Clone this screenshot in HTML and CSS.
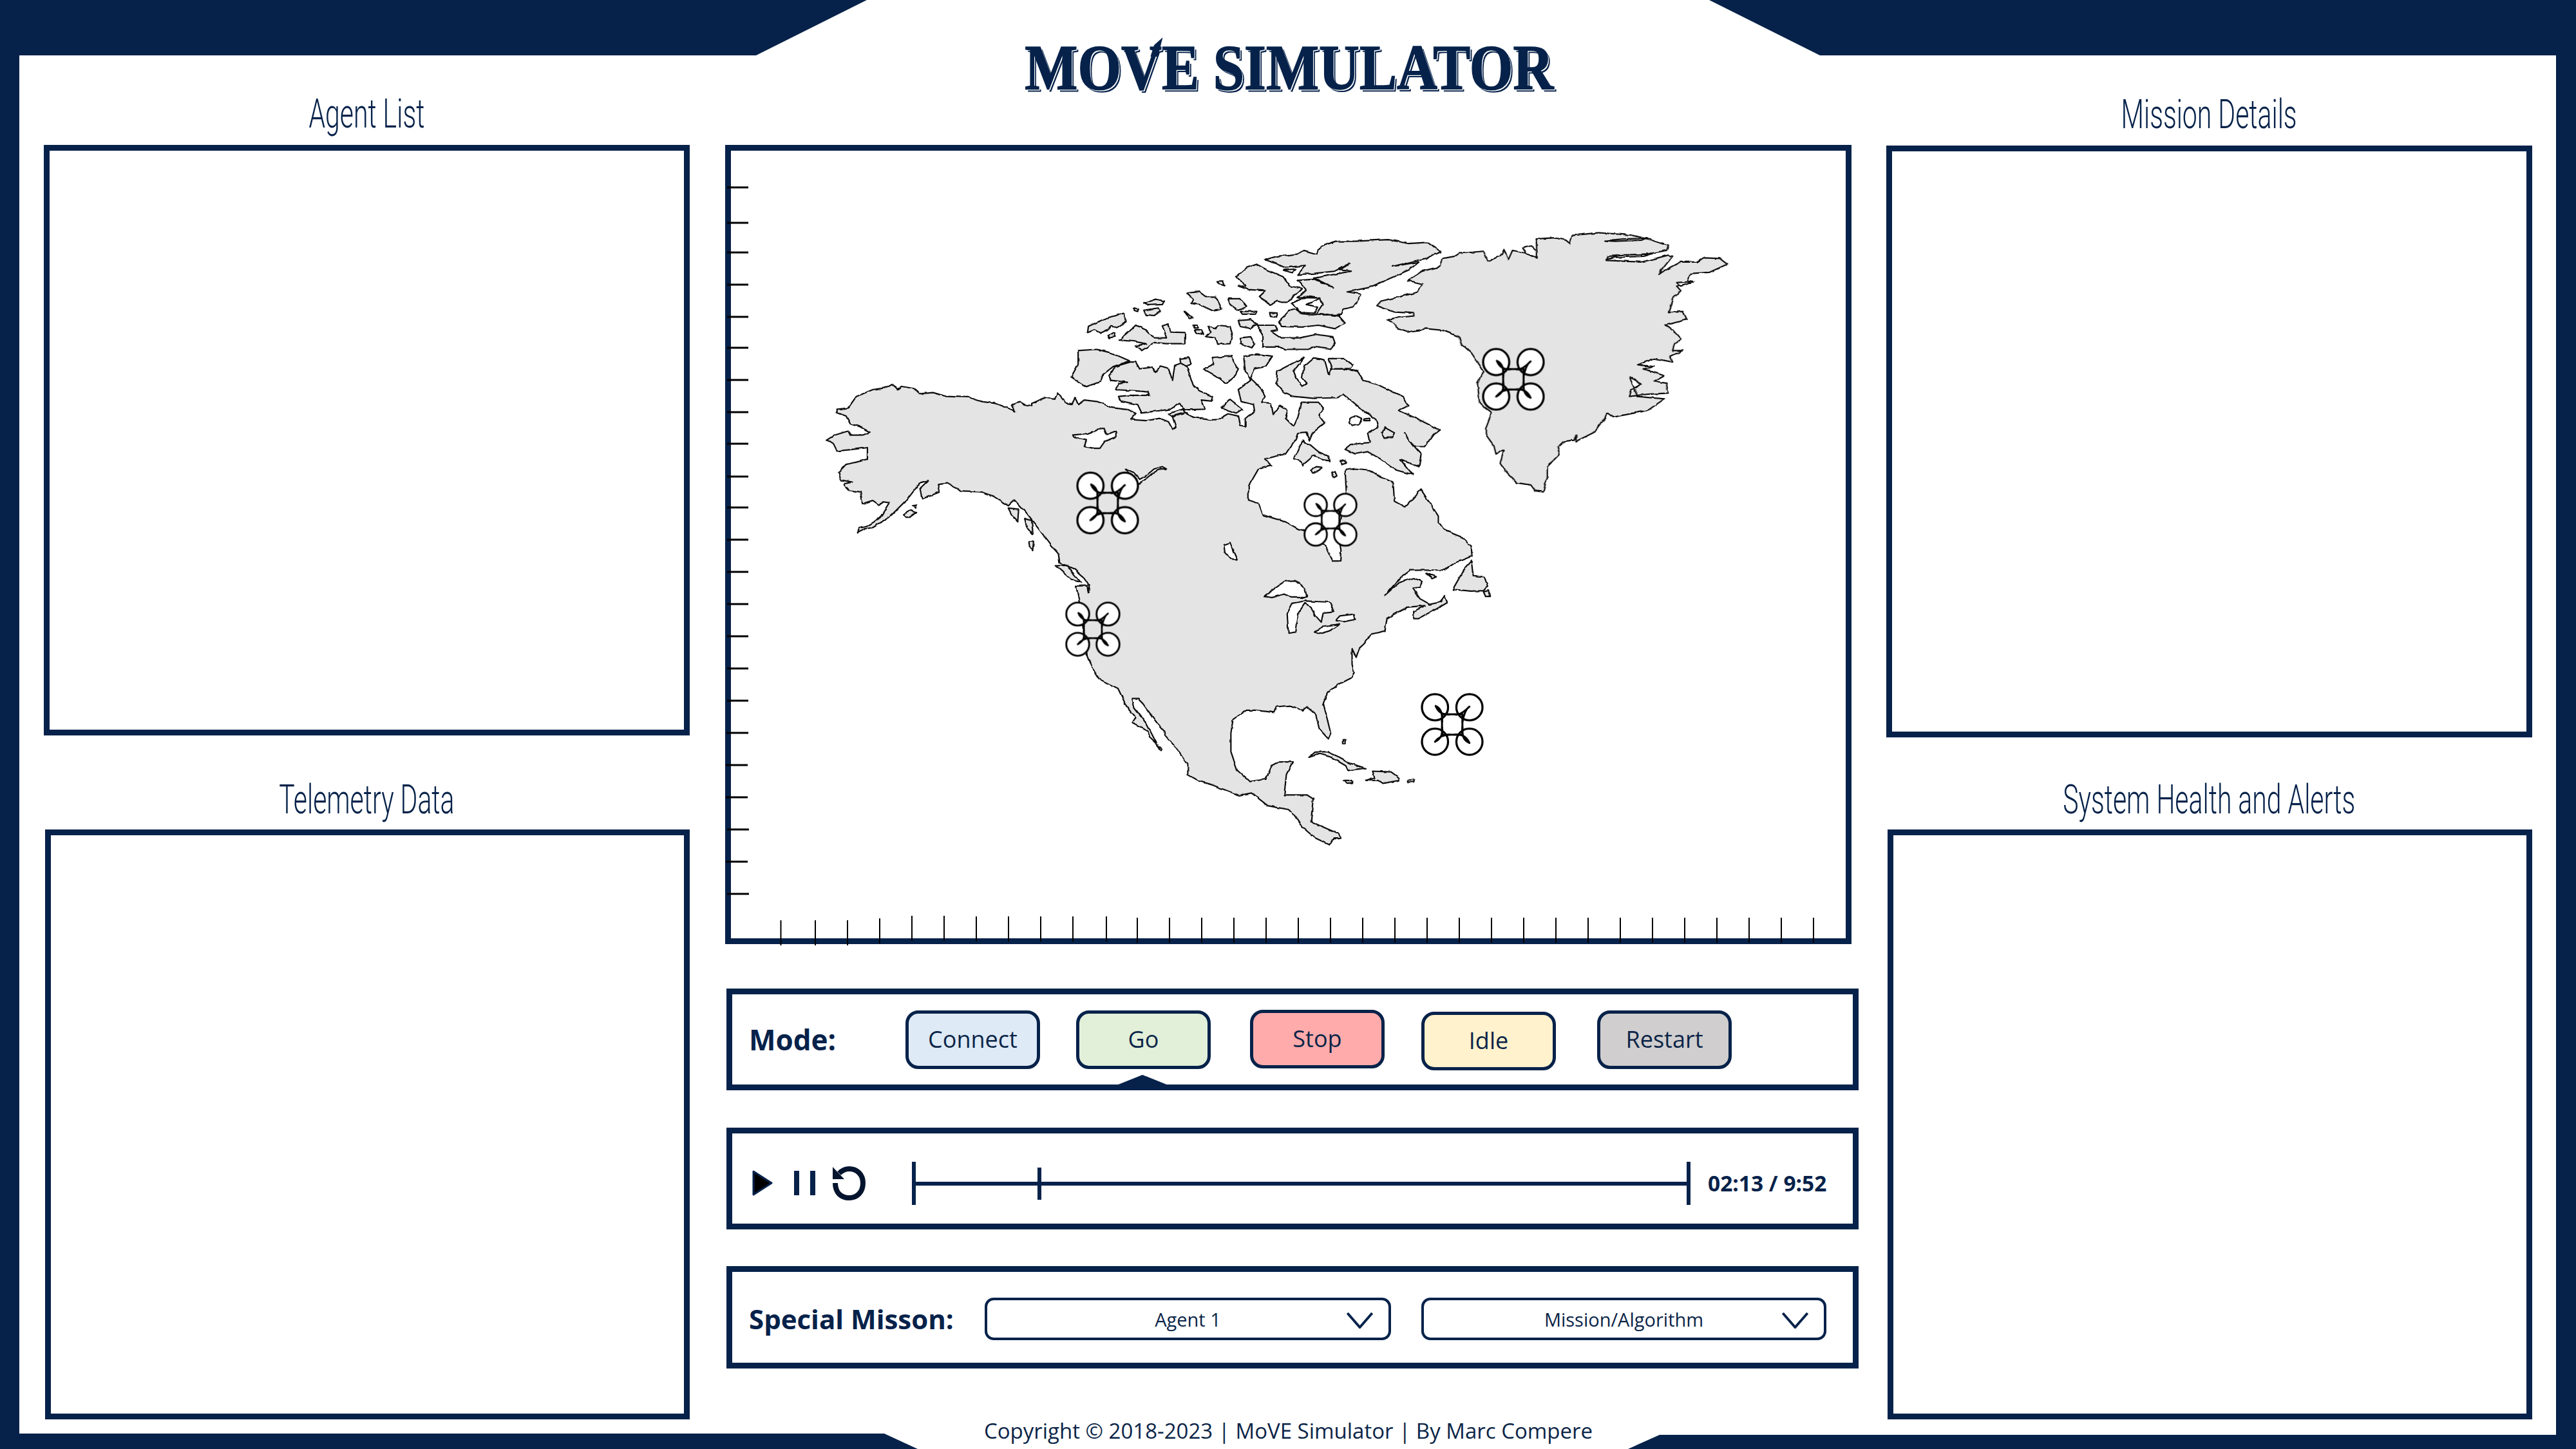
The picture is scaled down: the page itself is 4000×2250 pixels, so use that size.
FILE: index.html
```html
<!DOCTYPE html>
<html lang="en">
<head>
<meta charset="utf-8">
<title>MoVE Simulator</title>
<link rel="stylesheet" href="styles.css">
</head>
<body>
<div class="screen">
  <div class="sheet">
    <aside class="col col-left">
      <h2 class="heading"><span>Agent List</span></h2>
      <section class="panel panel-a"></section>
      <h2 class="heading heading-low"><span>Telemetry Data</span></h2>
      <section class="panel panel-b"></section>
    </aside>

    <main class="center">
      <header class="title-box"><h1 class="title">MO<span class="swash">V</span>E SIMULATOR</h1></header>

      <section class="map-panel">
        <svg class="map" viewBox="1126 225 1749 1241" xmlns="http://www.w3.org/2000/svg">
          <defs>
            <filter id="rough" filterUnits="userSpaceOnUse" x="1126" y="225" width="1749" height="1241">
              <feTurbulence type="fractalNoise" baseFrequency="0.09" numOctaves="2" seed="4" result="n"/>
              <feDisplacementMap in="SourceGraphic" in2="n" scale="4" xChannelSelector="R" yChannelSelector="G"/>
            </filter>
            <g id="drone">
              <circle class="rotor" cx="-27" cy="-27" r="20.5"/>
              <circle class="rotor" cx="27" cy="-27" r="20.5"/>
              <circle class="rotor" cx="-27" cy="27" r="20.5"/>
              <circle class="rotor" cx="27" cy="27" r="20.5"/>
              <rect class="body" x="-16" y="-16" width="32" height="32"/>
              <path class="arm" d="M-26-29Q-20-14-4-16M-26-29Q-14-24-16-4M27-28Q12-13 4-16M27-28Q20-24 16-4M-27 27Q-13 20-16 4M-27 27Q-18 16-4 16M27 29Q20 14 4 16M27 29Q14 24 16 4"/>
            </g>
          </defs>

          <g filter="url(#rough)">
            <g transform="translate(1250 330) scale(.63776 .35714)">
              <path class="land" d="M128 1390 132 1372 150 1365 168 1345 185 1320 205 1262 190 1258 180 1270 165 1252 140 1266 135 1215 108 1208 93 1180 115 1172 88 1163 82 1130 100 1095 125 1085 152 1072 152 1022 125 1028 78 1037 68 1000 52 990 72 968 105 950 110 968 140 968 158 955 132 930 110 918 100 885 78 870 78 855 105 850 125 800 165 770 195 762 212 745 225 768 235 756 265 765 280 788 312 783 345 800 398 803 430 822 465 830 505 858 512 868 503 835 525 825 535 835 552 840 552 830 585 805 608 812 615 785 635 828 650 832 658 805 665 835 680 815 712 822 745 848 790 858 805 875 792 900 830 905 865 895 885 910 895 942 903 932 895 890 922 868 945 890 985 902 1005 900 1030 875 1055 885 1060 925 1072 930 1072 895 1095 868 1092 835 1062 822 1055 770 1085 730 1072 690 1068 625 1100 615 1138 625 1122 668 1095 680 1085 720 1110 765 1120 800 1112 825 1135 830 1140 878 1155 840 1175 860 1170 895 1190 930 1200 890 1210 825 1250 825 1262 850 1250 880 1265 915 1235 960 1228 990 1222 955 1200 958 1195 985 1170 1050 1118 1072 1135 1098 1105 1112 1080 1190 1080 1250 1105 1265 1115 1315 1170 1345 1200 1375 1240 1395 1270 1460 1285 1515 1303 1515 1305 1470 1298 1400 1318 1215 1315 1120 1340 1113 1375 1120 1400 1150 1432 1172 1435 1255 1460 1280 1500 1205 1542 1320 1542 1350 1562 1385 1597 1410 1622 1450 1624 1494 1582 1524 1557 1554 1472 1556 1452 1584 1412 1664 1447 1609 1482 1589 1502 1604 1497 1629 1480 1634 1497 1679 1522 1704 1547 1694 1557 1666 1564 1696 1537 1724 1492 1766 1482 1766 1482 1734 1510 1709 1467 1716 1442 1739 1417 1764 1412 1819 1377 1834 1362 1874 1350 1894 1342 1934 1332 1896 1332 1964 1337 1999 1330 2024 1297 2054 1272 2089 1262 2134 1280 2264 1274 2289 1252 2244 1244 2184 1222 2149 1212 2164 1182 2144 1147 2149 1142 2174 1122 2169 1097 2164 1075 2164 1042 2204 1037 2264 1037 2344 1052 2424 1082 2474 1122 2464 1137 2404 1152 2389 1187 2389 1172 2444 1167 2532 1222 2532 1237 2549 1232 2649 1297 2699 1307 2719 1287 2719 1277 2749 1242 2719 1212 2674 1187 2609 1177 2596 1127 2579 1087 2524 1057 2534 992 2489 962 2474 932 2444 932 2399 907 2334 877 2274 874 2254 857 2219 822 2134 812 2116 797 2116 802 2154 832 2224 862 2329 867 2342 870 2334 840 2284 834 2254 797 2219 805 2194 782 2144 762 2069 717 2029 697 1974 687 1929 667 1684 660 1624 687 1622 690 1654 692 1624 677 1584 654 1549 642 1539 620 1524 617 1484 600 1450 575 1390 560 1355 535 1300 510 1250 495 1275 460 1235 430 1215 380 1210 345 1175 325 1180 328 1215 285 1245 280 1200 300 1165 280 1175 250 1245 205 1325 165 1370 145 1375Z"/>
              <path class="land" d="M1215 630 1190 690 1195 720 1210 755 1222 745 1210 720 1215 670 1240 632 1265 640 1275 705 1280 680 1310 680 1345 690 1360 730 1390 745 1420 770 1455 800 1470 840 1445 860 1470 880 1500 905 1545 945 1530 965 1510 1015 1480 1015 1460 960 1470 990 1500 1050 1495 1105 1450 1075 1480 1140 1440 1120 1400 1070 1370 1040 1340 1050 1315 1030 1330 1008 1375 1000 1370 960 1395 935 1390 900 1350 850 1310 790 1295 805 1240 808 1190 800 1165 780 1148 745 1150 690Z"/>
              <path class="land" d="M1275 635 1310 635 1335 665 1330 678 1285 680ZM1212 990 1200 1040 1188 1070 1207 1080 1212 1098 1240 1055 1260 1075 1278 1080 1275 1060 1250 1040 1230 1010 1215 1005ZM1245 1105 1258 1108 1250 1125 1238 1130 1233 1118ZM1303 1082 1313 1078 1318 1090 1308 1095ZM1283 1130 1290 1125 1295 1145 1288 1152ZM1412 935 1435 958 1430 975 1410 978 1405 958ZM240 1315 255 1295 270 1305 255 1325 245 1325ZM262 1275 272 1272 270 1285ZM495 1285 520 1290 518 1345 505 1320ZM535 1330 552 1340 555 1400 540 1370ZM545 1428 558 1430 556 1470 547 1455ZM665 600 710 595 745 610 790 645 750 670 725 705 720 735 685 757 648 715 665 660ZM792 650 805 650 815 680 845 672 855 695 865 670 885 680 895 730 900 665 915 655 930 670 945 750 960 775 992 800 990 820 965 815 975 855 925 858 912 830 890 855 820 872 810 835 770 820 765 800 790 795 838 795 835 780 805 775 755 770 765 745 785 738 745 730 740 710 755 670ZM913 635 935 630 940 655 928 670 915 655ZM992 630 1040 625 1045 660 1055 680 1045 715 1025 745 1000 710 970 680 995 660ZM1035 812 1065 855 1050 872 1015 850ZM885 875 920 855 925 870 895 885ZM690 495 730 462 778 437 780 475 760 500 745 495 738 510 720 525 705 510 688 522ZM805 490 830 510 850 545 880 545 870 490 885 482 890 520 925 522 925 570 880 570 850 565 820 600 805 580 830 570 800 560 765 555 785 525ZM738 535 752 520 755 540 742 545ZM825 425 860 415 865 430 850 448 830 445ZM825 395 855 377 875 385 870 400 835 403ZM800 415 812 420 810 430 800 425ZM925 430 945 460 935 460ZM930 350 960 345 975 365 1000 365 1015 420 990 425 960 400 940 395 945 375ZM1030 375 1060 375 1075 410 1055 425 1035 400ZM1060 430 1100 430 1095 442 1065 442ZM1055 470 1085 465 1100 485 1085 505 1060 495ZM945 490 955 490 958 502 948 502ZM950 510 965 510 970 530 955 525ZM980 495 1000 505 1005 490 1035 495 1040 530 1035 570 1005 572 1000 545 975 540 990 520ZM1060 545 1085 540 1095 570 1088 588 1060 570ZM1100 490 1145 490 1150 510 1135 515 1160 545 1205 545 1245 530 1285 540 1290 565 1280 595 1240 585 1225 595 1170 595 1160 585 1115 585 1115 530ZM1155 475 1175 430 1195 420 1210 440 1235 445 1258 440 1300 450 1315 480 1290 505 1250 490 1210 498 1160 495ZM1133 438 1148 440 1148 455 1135 452ZM1050 280 1075 240 1100 225 1125 250 1165 280 1180 320 1210 330 1175 390 1160 390 1150 385 1135 400 1105 365 1120 340 1080 335 1055 320 1075 320ZM1120 205 1150 190 1200 180 1215 165 1245 180 1255 150 1290 125 1340 125 1395 120 1420 118 1470 135 1515 130 1548 170 1510 200 1430 235 1495 215 1470 250 1420 290 1375 325 1320 345 1355 355 1345 385 1335 410 1310 420 1305 445 1260 445 1245 440 1260 400 1255 375 1225 365 1200 370 1220 335 1200 295 1240 290 1285 325 1240 285 1330 255 1300 250 1325 222 1290 255 1240 265 1200 270 1218 230 1170 240 1130 210ZM1005 298 1018 298 1022 318 1010 312Z"/>
              <path class="water" d="M652 968 690 960 728 935 735 965 757 950 757 975 730 995 718 1025 705 1025 680 1018 685 990 655 978ZM780 1115 800 1130 815 1160 830 1145 850 1115 870 1105 880 1115 865 1115 845 1135 825 1165 810 1180ZM1020 1445 1035 1435 1042 1470 1052 1510 1040 1510 1022 1475ZM1327 895 1340 882 1355 895 1350 922 1332 928 1325 915ZM1360 898 1375 895 1377 905 1362 905ZM1165 250 1195 245 1185 262ZM1185 395 1215 370 1255 372 1222 400 1248 412 1240 438 1208 435Z"/>
            </g>
            <g transform="translate(1800 330) scale(.63776 .35714)">
              <path class="land" d="M605 295 640 255 685 235 690 200 720 190 730 178 790 168 800 210 830 190 840 160 850 205 860 165 890 175 920 198 918 115 960 110 990 120 1000 135 1005 100 1070 88 1150 98 1190 115 1240 145 1235 165 1190 180 1095 190 1090 208 1175 215 1240 185 1250 190 1215 268 1270 215 1310 215 1325 197 1365 200 1383 225 1340 260 1295 265 1285 295 1300 300 1260 320 1270 340 1250 375 1240 435 1275 430 1285 465 1232 490 1250 510 1270 550 1255 570 1250 600 1275 600 1245 625 1250 650 1205 635 1165 662 1205 670 1180 680 1230 710 1205 735 1235 745 1240 785 1190 790 1145 800 1150 770 1175 745 1145 715 1165 800 1230 810 1190 860 1105 890 1090 870 1085 895 1060 955 1015 995 1015 965 1010 990 985 995 970 1020 975 1050 945 1105 945 1150 935 1215 915 1210 905 1185 870 1175 845 1130 830 1090 840 1030 820 1050 815 1015 795 965 795 940 810 870 780 830 775 740 790 690 760 610 735 570 730 540 690 512 650 505 605 520 580 505 570 480 555 465 590 455 620 450 620 438 570 432 530 405 540 385 600 360 630 345 640 310Z"/>
              <path class="water" d="M1085 122 1130 115 1185 112 1175 120 1110 125ZM1090 205 1120 185 1200 180 1180 190 1110 195ZM885 155 905 145 920 170 920 195 895 180ZM1260 305 1300 300 1270 320Z"/>
            </g>
            <g transform="translate(1500 860) scale(.63776 .35714)">
              <path class="water" d="M725 185 775 120 800 115 825 150 830 190 790 190 775 175 745 190ZM785 345 782 260 795 215 825 205 885 210 895 250 870 255 865 300 850 270 840 230 825 215 810 255 803 340ZM850 340 870 315 910 305 885 335 860 348ZM900 290 910 270 945 262 948 285 920 295ZM1120 85 1145 100 1135 108Z"/>
              <path class="land" d="M1215 60 1230 30 1235 95 1262 100 1270 140 1260 160 1230 162 1185 155ZM1260 165 1272 160 1275 185 1265 185ZM218 52 245 50 280 125 255 110ZM835 885 850 862 880 860 910 885 935 910 972 932 930 942 925 922 890 885 860 870ZM990 945 1035 948 1055 975 1055 985 1015 998 1005 985 972 985 995 975ZM920 985 938 985 943 995 930 997ZM1075 985 1092 980 1090 992 1076 992ZM917 808 923 808 923 825 917 825Z"/>
            </g>
          </g>

          <use href="#drone" transform="translate(1720 781) scale(.99)"/>
          <use href="#drone" transform="translate(2066 807) scale(.85)"/>
          <use href="#drone" transform="translate(2350 589) scale(.99)"/>
          <use href="#drone" transform="translate(1697 977) scale(.87)"/>
          <use href="#drone" transform="translate(2255 1125) scale(.99)"/>

          <path class="tick-left" d="M1129 291h33M1129 346h33M1129 392h33M1129 442h33M1129 492h33M1129 540h33M1129 590h33M1129 640h33M1129 689h33M1129 740h33M1129 788h33M1129 838h33M1129 888h33M1129 938h33M1129 988h33M1129 1038h33M1129 1088h33M1128 1138h34M1127 1188h34M1127 1238h34M1129 1288h34M1127 1338h34M1129 1388h34"/>
          <path class="tick-bottom" d="M1212.500 1429v39M1266 1429v39M1316 1429v39M1366 1426v39M1416 1422v39M1466 1422v39M1516 1423v39M1566 1423v39M1616 1423v39M1666 1423v39M1718 1423v39M1766 1425v39M1816 1425v39M1866 1425v39M1916 1425v39M1966 1425v39M2016 1425v39M2066 1425v39M2116 1425v39M2166 1425v39M2216 1425v39M2266 1425v39M2316 1425v39M2366 1425v39M2416 1425v39M2466 1425v39M2516 1425v39M2566 1425v39M2616 1425v39M2666 1425v39M2716 1425v39M2766 1425v39M2816 1425v39"/>
        </svg>
      </section>

      <section class="bar bar-mode">
        <span class="bar-label label-mode">Mode:</span>
        <button class="btn btn-connect">Connect</button>
        <button class="btn btn-go">Go</button>
        <button class="btn btn-stop">Stop</button>
        <button class="btn btn-idle">Idle</button>
        <button class="btn btn-restart">Restart</button>
        <i class="marker"></i>
      </section>

      <section class="bar bar-play">
        <svg class="ic ic-play" viewBox="0 0 32 40"><path d="M2 2 30 20 2 38Z"/></svg>
        <svg class="ic ic-pause" viewBox="0 0 33 38"><path d="M0 0h8v38H0zM25 0h8v38h-8z"/></svg>
        <svg class="ic ic-replay" viewBox="0 0 51 53"><path class="ic-arc" d="M4 26C4 41 13 49 25.500 49 38 49 47 40 47 26 47 13 38 4 25.500 4 19 4 14 7 10 11"/><path class="ic-head" d="M0 1 0 20 18 20Z"/></svg>
        <div class="track"><i class="stop-l"></i><i class="thumb"></i><i class="stop-r"></i></div>
        <span class="time">02:13 / 9:52</span>
      </section>

      <section class="bar bar-special">
        <span class="bar-label label-special">Special Misson:</span>
        <div class="select select-a"><span>Agent 1</span><svg class="chev" viewBox="0 0 44 26"><path d="M2 1 22 24 42 1"/></svg></div>
        <div class="select select-b"><span>Mission/Algorithm</span><svg class="chev" viewBox="0 0 44 26"><path d="M2 1 22 24 42 1"/></svg></div>
      </section>

      <footer class="copyright">Copyright © 2018-2023 | MoVE Simulator | By Marc Compere</footer>
    </main>

    <aside class="col col-right">
      <h2 class="heading"><span>Mission Details</span></h2>
      <section class="panel panel-c"></section>
      <h2 class="heading heading-low"><span>System Health and Alerts</span></h2>
      <section class="panel panel-d"></section>
    </aside>
  </div>
</div>
</body>
</html>
```
FILE: styles.css
```css
:root { --navy: #06224a; --ink: #0b2548; }
* { box-sizing: border-box; }
html, body { margin: 0; padding: 0; }
body { width: 4000px; height: 2250px; overflow: hidden; background: var(--navy); font-family: "Open Sans", "Liberation Sans", sans-serif; color: var(--ink); }
.screen { width: 4000px; height: 2250px; background: var(--navy); }
.sheet {
  width: 4000px; height: 2250px; background: #fff; display: flex; padding-left: 68px;
  clip-path: polygon(30px 86px, 1174px 86px, 1346px 0, 2654px 0, 2826px 86px, 3969px 86px, 3969px 2228px, 2577px 2228px, 2528px 2250px, 1425px 2250px, 1373px 2226px, 30px 2226px);
}
.col { width: 1003px; display: flex; flex-direction: column; padding-top: 139px; flex: none; }
.col-right { padding-top: 140px; }
.heading { margin: 0; height: 86px; display: flex; justify-content: center; font: 300 63px/75px Roboto, "Liberation Sans", sans-serif; color: var(--navy); white-space: nowrap; flex: none; }
.heading span { display: inline-block; transform: scaleX(.65); }
.heading-low { margin-top: 62px; height: 84px; }
.panel { border: 9px solid var(--navy); flex: none; }
.panel-a { height: 917px; }
.panel-b { height: 916px; margin-left: 2px; }
.panel-c { height: 919px; }
.panel-d { height: 916px; margin-left: 2px; width: 1001px; }
.col-right .heading-low { margin-top: 59px; }

.center { width: 1760px; margin: 0 43px 0 55px; flex: none; display: flex; flex-direction: column; }
.title-box { height: 225px; padding: 55px 8px 0 0; display: flex; justify-content: center; flex: none; }
.title { margin: 0; display: inline-block; font: 700 100px/100px "Liberation Serif", serif; color: var(--navy); white-space: nowrap; transform: scaleX(.87); -webkit-text-stroke: 1.5px var(--navy); text-shadow: 2px 2px 0 #fff, 4px 4px 0 var(--navy); }
.swash { position: relative; display: inline-block; }
.swash::after { content: ""; position: absolute; left: 52px; top: 3px; width: 22px; height: 30px; background: var(--navy); clip-path: polygon(100% 0, 60% 100%, 0 100%, 30% 40%); }

.map-panel { position: relative; width: 1749px; height: 1241px; border: 9px solid var(--navy); flex: none; }
.map { position: absolute; left: -9px; top: -9px; width: 1749px; height: 1241px; overflow: visible; }
.land { fill: #e4e4e4; stroke: #111; stroke-width: 2.2; stroke-linejoin: round; vector-effect: non-scaling-stroke; }
.water { fill: #fff; stroke: #111; stroke-width: 2.2; stroke-linejoin: round; vector-effect: non-scaling-stroke; }
.rotor { fill: #fff; stroke: #000; stroke-width: 3.3; }
.body { fill: none; stroke: #000; stroke-width: 3; }
.arm { fill: none; stroke: #000; stroke-width: 3; stroke-linecap: round; }
.tick-left { fill: none; stroke: #000; stroke-width: 3; }
.tick-bottom { fill: none; stroke: #000; stroke-width: 2; }

.bar { position: relative; width: 1758px; margin-left: 2px; height: 158px; border: 9px solid var(--navy); display: flex; align-items: center; padding-left: 26px; flex: none; }
.bar-mode { margin-top: 69px; }
.bar-play { margin-top: 58px; padding: 14px 0 0 31px; }
.bar-special { margin-top: 57px; height: 159px; padding-top: 5px; }
.bar-label { font-weight: 700; font-size: 43px; line-height: 60px; color: var(--navy); white-space: nowrap; }
.label-mode { width: 243px; flex: none; font-size: 44px; }
.label-special { width: 366px; flex: none; font-size: 42px; }

.btn { width: 209px; height: 91px; border: 5px solid var(--navy); border-radius: 20px; font: 400 36px/1 "Open Sans", sans-serif; color: var(--ink); padding: 0; flex: none; }
.btn-connect { background: #deeaf6; }
.btn-go { background: #e2efd9; margin-left: 56px; }
.btn-stop { background: #ffabab; margin-left: 61px; margin-bottom: 2px; }
.btn-idle { background: #fff2cc; margin-left: 57px; margin-top: 4px; }
.btn-restart { background: #d0cece; margin-left: 64px; }
.marker { position: absolute; left: 597px; bottom: -1px; width: 80px; height: 16px; background: var(--navy); clip-path: polygon(0 100%, 50% 0, 100% 100%); }

.ic { display: block; flex: none; }
.ic-play { width: 32px; height: 40px; fill: #000; stroke: var(--navy); stroke-width: 3; stroke-linejoin: round; }
.ic-pause { width: 33px; height: 38px; margin-left: 33px; fill: var(--navy); }
.ic-replay { width: 51px; height: 53px; margin-left: 27px; overflow: visible; }
.ic-arc { fill: none; stroke: #04142e; stroke-width: 8; }
.ic-head { fill: #04142e; }
.track { position: relative; width: 1209px; height: 67px; margin-left: 72px; flex: none; }
.track::before { content: ""; position: absolute; left: 0; right: 0; top: 31px; height: 6px; background: var(--navy); }
.track i { position: absolute; width: 6px; background: var(--navy); }
.stop-l { left: 0; top: 0; height: 67px; }
.stop-r { right: 0; top: 0; height: 67px; }
.thumb { left: 195px; top: 9px; height: 50px; }
.time { margin-left: 27px; font-weight: 700; font-size: 33.500px; line-height: 46px; color: var(--navy); white-space: nowrap; }

.select { position: relative; width: 631px; height: 66px; border: 4px solid var(--navy); border-radius: 14px; display: flex; align-items: center; justify-content: center; font-size: 29px; color: var(--ink); flex: none; }
.select-b { width: 629px; margin-left: 47px; }
.chev { position: absolute; right: 23px; top: 19px; width: 43px; height: 25px; fill: none; stroke: var(--navy); stroke-width: 4; }

.copyright { margin-top: 74px; padding-right: 11px; text-align: center; font-size: 33px; line-height: 45px; color: var(--ink); white-space: nowrap; }
```
